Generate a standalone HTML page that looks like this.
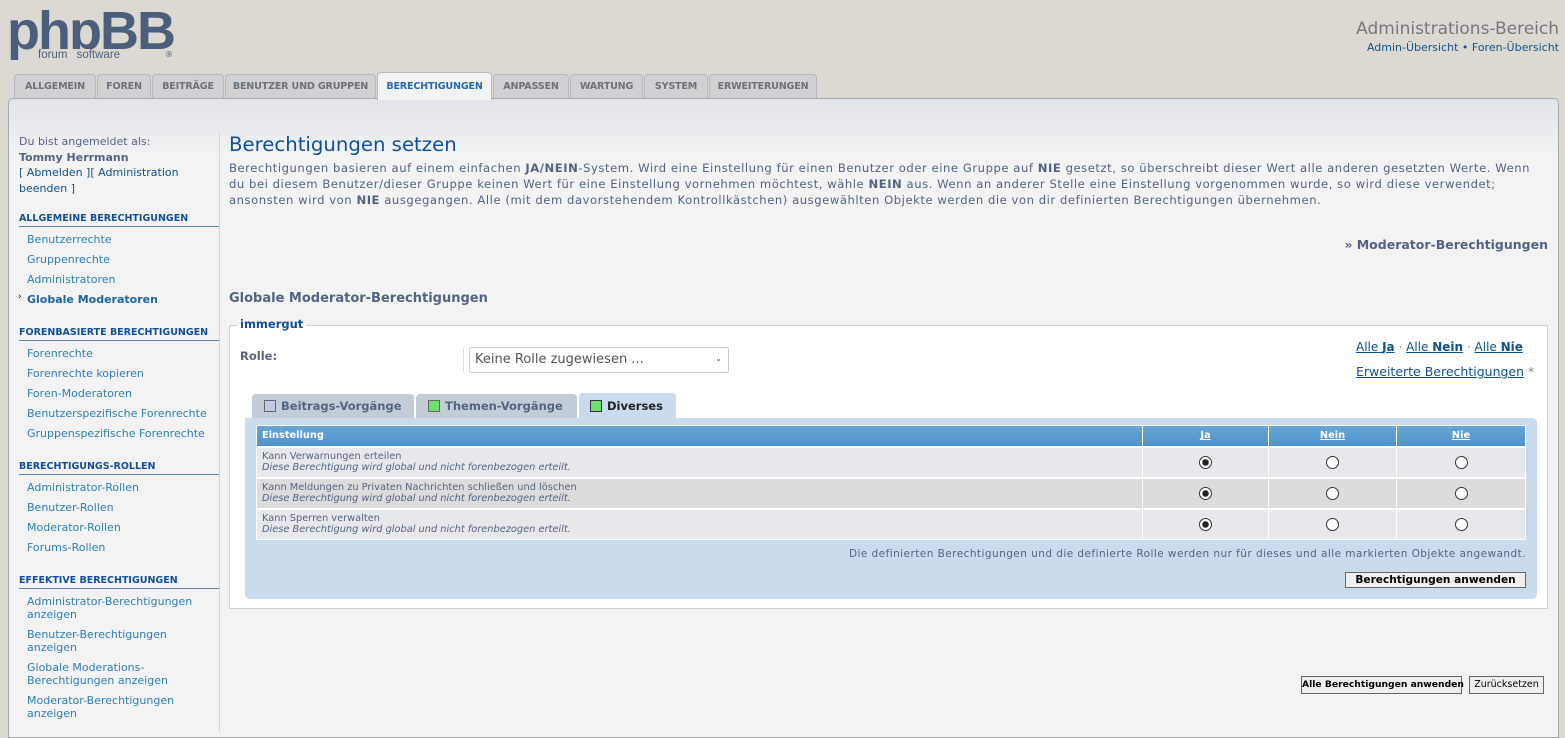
<!DOCTYPE html>
<html><head><meta charset="utf-8">
<style>
*{box-sizing:border-box;margin:0;padding:0}
body{width:1565px;height:727px;overflow:hidden;background:#dcd9d3;font-family:"DejaVu Sans","Liberation Sans",sans-serif;color:#536482;position:relative}
.abs{position:absolute}
a{color:#105289;text-decoration:none}
.logo{left:7px;top:4px;font-family:"Liberation Sans",sans-serif;font-weight:bold;font-size:54px;color:#4b5f7c;letter-spacing:-2px;line-height:54px}
.logosub{left:36px;top:49px;font-family:"Liberation Sans",sans-serif;font-size:11.5px;color:#4b5f7c;background:#dcd9d3;padding:0 2px;line-height:13px}
.tab{position:absolute;top:74px;height:24px;background:#cfd1d3;border:1px solid #b4b9be;border-bottom:none;border-radius:4px 4px 0 0;font-size:9.6px;color:#6b737a;text-align:center;line-height:24px;font-weight:bold;letter-spacing:-0.2px;white-space:nowrap}
.tab.act{top:72px;height:28px;background:#f2f3f3;color:#2b6aab;z-index:3;line-height:28px;border-color:#b4b9be}
.panel{left:8px;top:98px;width:1551px;height:640px;border:1px solid #a4a9ad;border-radius:5px 5px 0 0;background:linear-gradient(#e1e5ea 0,#f3f3f3 60px,#f3f3f3);z-index:2}
.side{left:19px;font-size:11px;color:#536482;z-index:4}
.sh{position:absolute;left:19px;width:200px;font-size:9.5px;font-weight:bold;color:#115098;border-bottom:1px solid #5a84ab;padding-bottom:2px;z-index:4}
.si{position:absolute;left:27px;font-size:11px;color:#2e7fb3;z-index:4;line-height:13px}
.vline{left:219px;top:132px;width:1px;height:600px;background:#d2d6da;z-index:4}
.z{z-index:5}
.btn{white-space:nowrap}
</style></head><body>
<div class="abs logo">phpBB</div>
<div class="abs logosub">forum <span style="display:inline-block;width:6px"></span>software</div>
<div class="abs" style="left:165px;top:50px;font-size:8px;color:#4b5f7c">®</div>
<div class="abs" style="right:6px;top:19px;font-size:17px;color:#777">Administrations-Bereich</div>
<div class="abs" style="right:6px;top:41px;font-size:11px;color:#105289">Admin-Übersicht • Foren-Übersicht</div>

<div class="tab" style="left:14px;width:82px">ALLGEMEIN</div>
<div class="tab" style="left:97px;width:54px">FOREN</div>
<div class="tab" style="left:152px;width:72px">BEITRÄGE</div>
<div class="tab" style="left:225px;width:151px">BENUTZER UND GRUPPEN</div>
<div class="tab act" style="left:377px;width:115px">BERECHTIGUNGEN</div>
<div class="tab" style="left:493px;width:76px">ANPASSEN</div>
<div class="tab" style="left:570px;width:73px">WARTUNG</div>
<div class="tab" style="left:644px;width:64px">SYSTEM</div>
<div class="tab" style="left:709px;width:108px">ERWEITERUNGEN</div>

<div class="abs panel"></div>
<div class="abs vline"></div>

<div class="abs side" style="top:134px;line-height:15.5px">Du bist angemeldet als:<br><b>Tommy Herrmann</b><br><span style="color:#105289">[ Abmelden ][ Administration<br>beenden ]</span></div>

<div class="sh" style="top:213px">ALLGEMEINE BERECHTIGUNGEN</div>
<div class="si" style="top:233px">Benutzerrechte</div>
<div class="si" style="top:253px">Gruppenrechte</div>
<div class="si" style="top:273px">Administratoren</div>
<div class="si" style="top:293px;font-weight:bold;color:#2064a0">Globale Moderatoren</div>
<div class="abs z" style="left:18px;top:292px;font-size:9px;color:#000">›</div>
<div class="sh" style="top:327px">FORENBASIERTE BERECHTIGUNGEN</div>
<div class="si" style="top:347px">Forenrechte</div>
<div class="si" style="top:367px">Forenrechte kopieren</div>
<div class="si" style="top:387px">Foren-Moderatoren</div>
<div class="si" style="top:407px">Benutzerspezifische Forenrechte</div>
<div class="si" style="top:427px">Gruppenspezifische Forenrechte</div>
<div class="sh" style="top:461px">BERECHTIGUNGS-ROLLEN</div>
<div class="si" style="top:481px">Administrator-Rollen</div>
<div class="si" style="top:501px">Benutzer-Rollen</div>
<div class="si" style="top:521px">Moderator-Rollen</div>
<div class="si" style="top:541px">Forums-Rollen</div>
<div class="sh" style="top:575px">EFFEKTIVE BERECHTIGUNGEN</div>
<div class="si" style="top:595px">Administrator-Berechtigungen<br>anzeigen</div>
<div class="si" style="top:628px">Benutzer-Berechtigungen<br>anzeigen</div>
<div class="si" style="top:661px">Globale Moderations-<br>Berechtigungen anzeigen</div>
<div class="si" style="top:694px">Moderator-Berechtigungen<br>anzeigen</div>

<div class="abs z" style="left:229px;top:133px;font-size:19.7px;color:#115098">Berechtigungen setzen</div>
<div class="abs z" style="left:229px;top:160px;width:1330px;font-size:11.6px;line-height:16px;color:#536482;letter-spacing:0.55px;white-space:nowrap">Berechtigungen basieren auf einem einfachen <b>JA/NEIN</b>-System. Wird eine Einstellung für einen Benutzer oder eine Gruppe auf <b>NIE</b> gesetzt, so überschreibt dieser Wert alle anderen gesetzten Werte. Wenn<br>du bei diesem Benutzer/dieser Gruppe keinen Wert für eine Einstellung vornehmen möchtest, wähle <b>NEIN</b> aus. Wenn an anderer Stelle eine Einstellung vorgenommen wurde, so wird diese verwendet;<br>ansonsten wird von <b>NIE</b> ausgegangen. Alle (mit dem davorstehendem Kontrollkästchen) ausgewählten Objekte werden die von dir definierten Berechtigungen übernehmen.</div>
<div class="abs z" style="right:17px;top:237px;font-size:12.5px;font-weight:bold;color:#536482">» Moderator-Berechtigungen</div>
<div class="abs z" style="left:229px;top:291px;font-size:13px;font-weight:bold;color:#536482">Globale Moderator-Berechtigungen</div>

<div class="abs z" style="left:229px;top:325px;width:1319px;height:284px;background:#fff;border:1px solid #ccd1d6"></div>
<div class="abs z" style="left:237px;top:317px;font-size:11.5px;font-weight:bold;color:#115098;background:linear-gradient(#f3f3f3 50%,#fff 50%);padding:0 3px">immergut</div>
<div class="abs z" style="left:240px;top:349px;font-size:11.5px;font-weight:bold;color:#536482">Rolle:</div>
<div class="abs z" style="left:463px;top:347px;width:1px;height:26px;background:#ddd"></div>
<div class="abs z" style="left:469px;top:347px;width:260px;height:26px;border:1px solid #ccc;border-radius:2px;font-size:13px;color:#555;padding:4px 5px;background:#fff">Keine Rolle zugewiesen ...<span style="position:absolute;right:6px;top:6px;font-size:8px">⌄</span></div>
<div class="abs z" style="left:1356px;top:340px;font-size:12px;color:#105289"><u>Alle <b>Ja</b></u> <span style="color:#888">·</span> <u>Alle <b>Nein</b></u> <span style="color:#888">·</span> <u>Alle <b>Nie</b></u></div>
<div class="abs z" style="left:1356px;top:364px;font-size:12.5px;color:#105289"><u>Erweiterte Berechtigungen</u> <span style="color:#888">*</span></div>

<div class="abs z" style="left:252px;top:394px;width:162px;height:25px;background:#c3cdd7;border-radius:4px 4px 0 0;font-size:11.5px;font-weight:bold;color:#536482;padding:5px 0 0 12px"><span style="display:inline-block;width:12px;height:12px;background:#c4c9e3;border:1px solid #666;vertical-align:-2px;margin-right:5px"></span>Beitrags-Vorgänge</div>
<div class="abs z" style="left:416px;top:394px;width:161px;height:25px;background:#c3cdd7;border-radius:4px 4px 0 0;font-size:11.5px;font-weight:bold;color:#536482;padding:5px 0 0 12px"><span style="display:inline-block;width:12px;height:12px;background:#6de06d;border:1px solid #666;vertical-align:-2px;margin-right:5px"></span>Themen-Vorgänge</div>
<div class="abs z" style="left:579px;top:393px;width:97px;height:26px;background:#c9dbec;border-radius:4px 4px 0 0;font-size:11.5px;font-weight:bold;color:#222;padding:6px 0 0 11px"><span style="display:inline-block;width:12px;height:12px;background:#6de06d;border:1px solid #333;vertical-align:-2px;margin-right:5px"></span>Diverses</div>

<div class="abs z" style="left:245px;top:418px;width:1292px;height:181px;background:#c9dbec;border-radius:0 5px 5px 5px"></div>
<table class="abs z" style="left:256px;top:425px;width:1270px;border-collapse:collapse;font-size:9.8px;background:#fff;border:1px solid #fff">
<tr style="height:21px;background:linear-gradient(#6aa6d6,#4c90c8);color:#fff;font-weight:bold">
<td style="padding-left:5px;width:886px;border-right:1px solid #fff">Einstellung</td>
<td style="text-align:center;width:126px;border-right:1px solid #fff"><u>Ja</u></td>
<td style="text-align:center;width:128px;border-right:1px solid #fff"><u>Nein</u></td>
<td style="text-align:center"><u>Nie</u></td></tr>
<tbody id="b"></tbody>
</table>
<script>
var rows=["Kann Verwarnungen erteilen","Kann Meldungen zu Privaten Nachrichten schließen und löschen","Kann Sperren verwalten"],h="";
var r='<span style="display:inline-block;width:13px;height:13px;border:1px solid #333;border-radius:50%;background:#fff;vertical-align:middle"></span>';
var rc='<span style="display:inline-block;width:13px;height:13px;border:1px solid #333;border-radius:50%;background:radial-gradient(#222 0,#222 3px,#fff 3.5px);vertical-align:middle"></span>';
rows.forEach(function(t,i){var bg=i==1?"#dcdcdc":"#e6e9ec";h+='<tr style="height:31px;background:'+bg+';border-top:2px solid #fff"><td style="padding-left:5px;color:#536482;line-height:11px;border-right:1px solid #fff">'+t+'<br><i>Diese Berechtigung wird global und nicht forenbezogen erteilt.</i></td><td style="text-align:center;border-right:1px solid #fff">'+rc+'</td><td style="text-align:center;border-right:1px solid #fff">'+r+'</td><td style="text-align:center">'+r+'</td></tr>';});
document.getElementById("b").innerHTML=h;
</script>
<div class="abs z" style="right:39px;top:548px;font-size:10.5px;color:#536482;letter-spacing:0.45px;white-space:nowrap">Die definierten Berechtigungen und die definierte Rolle werden nur für dieses und alle markierten Objekte angewandt.</div>
<div class="abs z btn" style="left:1345px;top:572px;width:181px;height:16px;border:1px solid #666;background:#efefef;font-size:10.6px;font-weight:bold;color:#000;text-align:center;line-height:14px">Berechtigungen anwenden</div>
<div class="abs z btn" style="left:1301px;top:676px;width:161px;height:18px;border:1px solid #666;background:#efefef;font-size:9.2px;font-weight:bold;color:#000;text-align:center;line-height:16px">Alle Berechtigungen anwenden</div>
<div class="abs z btn" style="left:1469px;top:676px;width:75px;height:18px;border:1px solid #666;background:#efefef;font-size:9.5px;color:#000;text-align:center;line-height:16px">Zurücksetzen</div>
</body></html>
